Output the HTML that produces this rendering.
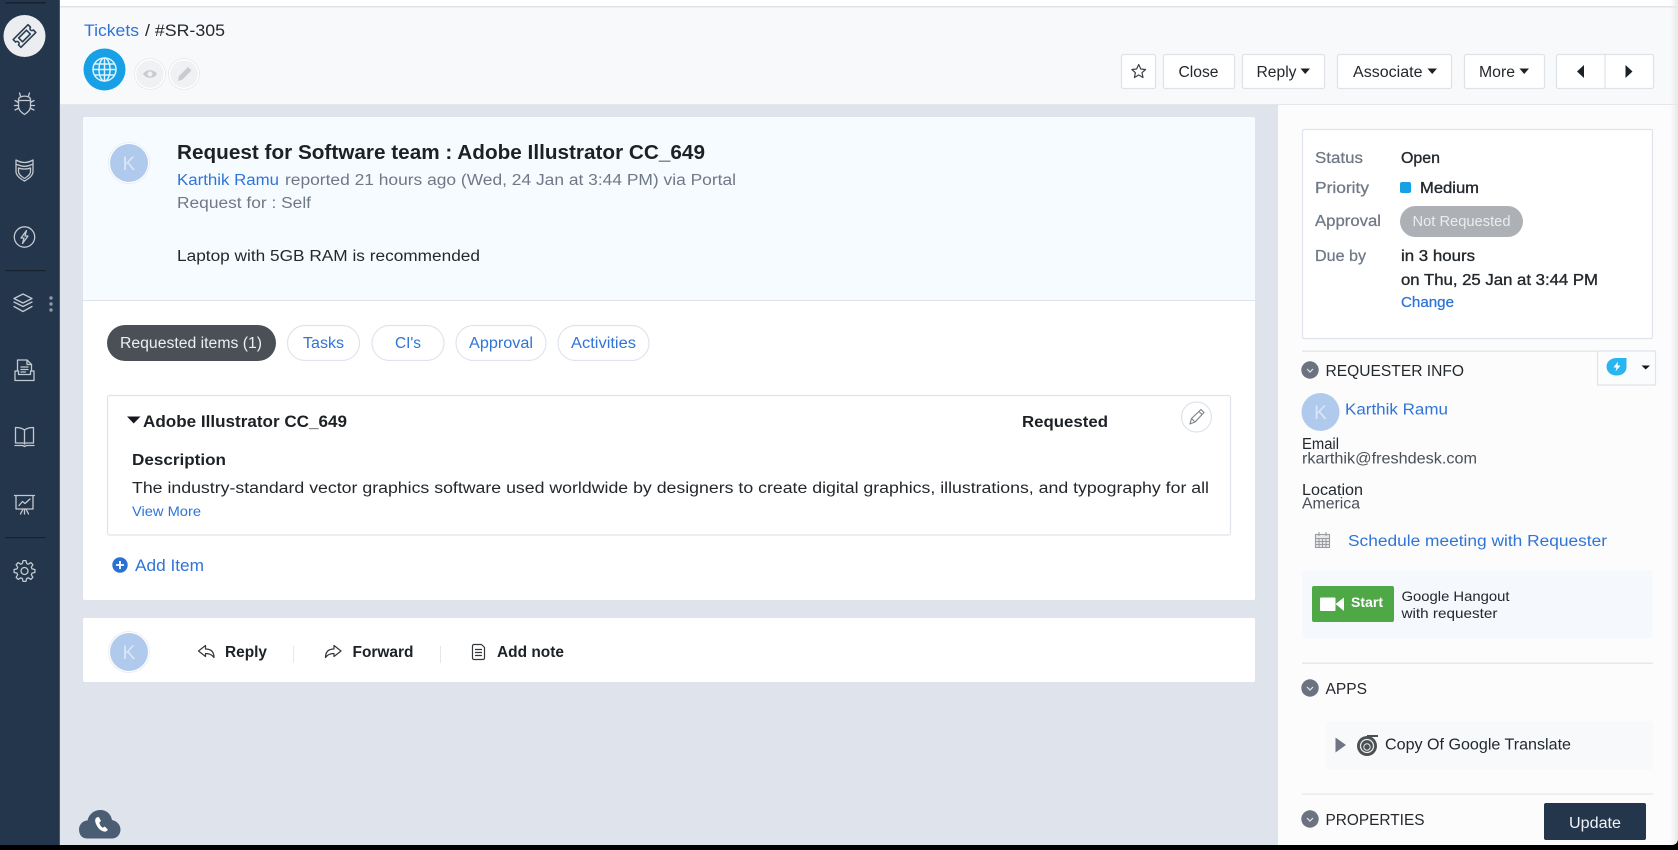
<!DOCTYPE html>
<html>
<head>
<meta charset="utf-8">
<style>
html,body{margin:0;padding:0;background:#000;width:1678px;height:850px;overflow:hidden}
svg{display:block}
text{font-family:"Liberation Sans",sans-serif;font-size:15.5px;fill:#23282d}
.l{fill:#2f74d6}
.g{fill:#6f7885}
.gm{fill:#6f7885;stroke:#6f7885;stroke-width:.25}
.d{fill:#4a5058}
.b{font-weight:bold;fill:#1c2126}
.m{stroke:#23282d;stroke-width:.35}
.ic{fill:none;stroke:#c3c9d1;stroke-width:1.300;stroke-linecap:round;stroke-linejoin:round}
.btn{fill:#fff;stroke:#dfe3e8;stroke-width:1.2}
.tab{fill:#fff;stroke:#dfe4ec;stroke-width:1.2}
</style>
</head>
<body>
<svg width="1678" height="850" viewBox="0 0 1678 850" xmlns="http://www.w3.org/2000/svg">
<defs>
<linearGradient id="edge" x1="0" x2="1" y1="0" y2="0">
<stop offset="0" stop-color="#e9ebed" stop-opacity="0"/>
<stop offset="1" stop-color="#e6e8ea"/>
</linearGradient>
</defs>
<!-- backgrounds -->
<rect x="0" y="0" width="1678" height="845" fill="#dfe4ec"/>
<rect x="60" y="0" width="1618" height="7" fill="#ffffff"/>
<rect x="60" y="6" width="1618" height="1.5" fill="#dfe3e8"/>
<rect x="60" y="7.5" width="1618" height="96.5" fill="#f7f9fb"/>
<rect x="60" y="104" width="1618" height="1" fill="#e4e8ed"/>
<rect x="1278" y="105" width="400" height="740" fill="#fcfcfd"/>
<rect x="1670" y="0" width="8" height="845" fill="url(#edge)"/>
<!-- sidebar -->
<rect x="0" y="0" width="60" height="845" fill="#24364b"/>
<rect x="59" y="0" width="1" height="845" fill="#46586b"/>
<rect x="5" y="2" width="41" height="1.500" fill="#16222f"/>
<rect x="5" y="270" width="41" height="1.200" fill="#16222f"/>
<rect x="5" y="537" width="41" height="1.200" fill="#16222f"/>
<circle cx="24.500" cy="36" r="21" fill="#ebedf0"/>
<g transform="translate(24.500 36) rotate(-45)" fill="none" stroke="#2c3e52" stroke-width="1.600" stroke-linejoin="round">
  <path d="M-10.500 -5.500H10.500V-2A2 2 0 0 0 10.500 2V5.500H-10.500V2A2 2 0 0 0 -10.500 -2Z"/>
  <rect x="-5.500" y="-2.700" width="11" height="5.400"/>
</g>
<!-- bug -->
<g class="ic" transform="translate(24.500 104)">
  <path d="M-6 -4.500C-6 -9 6 -9 6 -4.500V3C6 6 3 8.500 0 10.500C-3 8.500 -6 6 -6 3Z"/>
  <path d="M-6 -3.500H6"/>
  <path d="M-4 -8L-5 -11M4 -8L5 -11M-6 -1.500L-9.500 -3.500M6 -1.500L9.500 -3.500M-6 1.500H-10M6 1.500H10M-5.500 4L-9.500 6M5.500 4L9.500 6"/>
</g>
<!-- shield -->
<g class="ic" transform="translate(24.500 170.500)">
  <path d="M-8.500 -10.500C-5 -8.500 -3 -8 0 -8C3 -8 5 -8.500 8.500 -10.500V-6.500C5 -4.800 3 -4.200 0 -4.200C-3 -4.200 -5 -4.800 -8.500 -6.500Z"/>
  <path d="M-8.500 -6.500V1C-8.500 5.500 -3.500 8.500 0 10.500C3.500 8.500 8.500 5.500 8.500 1V-6.500"/>
  <path d="M-6 -2.500C-3 -1.200 3 -1.200 6 -2.500V1C6 4 2.500 6.500 0 8C-2.500 6.500 -6 4 -6 1Z"/>
</g>
<!-- bolt -->
<g class="ic" transform="translate(24.500 237)">
  <circle r="10.200"/>
  <path d="M2 -6.500L-3.500 1H-0.500L-2 6.500L3.500 -1H0.500Z"/>
</g>
<!-- layers -->
<g class="ic" transform="translate(23 304)">
  <path d="M0 -10L9 -5.500L0 -1L-9 -5.500Z"/>
  <path d="M-9 -2L0 2.500L9 -2"/>
  <path d="M-9 2.500L0 7.500L9 2.500"/>
</g>
<circle cx="51" cy="298" r="1.700" fill="#8f99a6"/>
<circle cx="51" cy="304" r="1.700" fill="#8f99a6"/>
<circle cx="51" cy="310" r="1.700" fill="#8f99a6"/>
<!-- report -->
<g class="ic" transform="translate(24.500 370)">
  <path d="M-7 1V-10H2.500L7 -5.500V1"/>
  <path d="M2.500 -10V-5.500H7"/>
  <path d="M-3.500 -3H3.500M-3.500 -0.500H3.500M-3.500 2H1"/>
  <path d="M-9.500 1V10.500H9.500V1H6V4.500H-6V1Z"/>
</g>
<!-- book -->
<g class="ic" transform="translate(24.500 437)">
  <path d="M0 -7C-2.500 -9 -6 -9.500 -9 -9.500V6H-1.500C-0.800 6 -0.300 6.300 0 7C0.300 6.300 0.800 6 1.500 6H9V-9.500C6 -9.500 2.500 -9 0 -7Z"/>
  <path d="M0 -7V7"/>
  <path d="M-9.500 8.500H-2L0 9.500L2 8.500H9.500"/>
</g>
<!-- presentation -->
<g class="ic" transform="translate(24.500 504)">
  <path d="M-10 -8.500H10M-8.500 -8.500V5H8.500V-8.500"/>
  <path d="M-5.500 1.500L-2 -2.500L0.500 -0.500L5.500 -5"/>
  <path d="M-1.500 5L-4 10M1.500 5L4 10M0 5V10"/>
</g>
<!-- gear -->
<g class="ic" transform="translate(24.500 571)">
  <circle r="3.500"/>
  <path d="M-2.150 -7.500L-1.460 -10.400L1.460 -10.400L2.150 -7.500L3.780 -6.820L6.320 -8.390L8.390 -6.320L6.820 -3.780L7.500 -2.150L10.400 -1.460L10.400 1.460L7.500 2.150L6.820 3.780L8.390 6.320L6.320 8.390L3.780 6.820L2.150 7.500L1.460 10.400L-1.460 10.400L-2.150 7.500L-3.780 6.820L-6.320 8.390L-8.390 6.320L-6.820 3.780L-7.500 2.150L-10.400 1.460L-10.400 -1.460L-7.500 -2.150L-6.820 -3.780L-8.390 -6.320L-6.320 -8.390L-3.780 -6.820Z"/>
</g>

<!-- header -->
<text x="84" y="36" class="l" style="font-size:17px" textLength="55" lengthAdjust="spacingAndGlyphs">Tickets</text>
<text x="145" y="36" style="font-size:17px" textLength="80" lengthAdjust="spacingAndGlyphs">/ #SR-305</text>
<circle cx="104.500" cy="69.500" r="21" fill="#18a0e6"/>
<g fill="none" stroke="#dff2fc" stroke-width="1.500" transform="translate(104.500 69.500)">
  <circle r="11.500"/>
  <ellipse rx="5.500" ry="11.500"/>
  <path d="M0 -11.500V11.500M-11.500 0H11.500M-10 -5.500H10M-10 5.500H10"/>
</g>
<circle cx="150" cy="74" r="14.500" fill="#f0f1f3" stroke="#fff" stroke-width="1.500"/>
<circle cx="150" cy="74" r="15.500" fill="none" stroke="#e6e8eb" stroke-width=".8"/>
<path d="M143 74C146 69 154 69 157 74C154 79 146 79 143 74Z" fill="#c8cbd0"/>
<circle cx="150" cy="74" r="2.500" fill="#f0f1f3"/>
<circle cx="184" cy="74" r="14.500" fill="#f0f1f3" stroke="#fff" stroke-width="1.500"/>
<circle cx="184" cy="74" r="15.500" fill="none" stroke="#e6e8eb" stroke-width=".8"/>
<path d="M178 81L179 76L188 67L191.500 70.500L182.500 79.500Z" fill="#c8cbd0"/>

<!-- header buttons -->
<rect x="1121.500" y="54.500" width="34" height="34" rx="2" class="btn"/>
<path d="M1138.700 64.500L1140.800 69L1145.500 69.500L1142 72.700L1143 77.500L1138.700 75L1134.400 77.500L1135.400 72.700L1131.900 69.500L1136.600 69Z" fill="none" stroke="#3c4248" stroke-width="1.200" stroke-linejoin="round"/>
<rect x="1163.500" y="54.500" width="71" height="34" rx="2" class="btn"/>
<text x="1178.500" y="77" textLength="40" lengthAdjust="spacingAndGlyphs">Close</text>
<rect x="1242.500" y="54.500" width="82" height="34" rx="2" class="btn"/>
<text x="1256.500" y="77" textLength="40" lengthAdjust="spacingAndGlyphs">Reply</text>
<path d="M1300.500 68.500H1310L1305.200 74Z" fill="#1c2126"/>
<rect x="1337.500" y="54.500" width="114" height="34" rx="2" class="btn"/>
<text x="1353" y="77" textLength="69.500" lengthAdjust="spacingAndGlyphs">Associate</text>
<path d="M1427.500 68.500H1437L1432.200 74Z" fill="#1c2126"/>
<rect x="1464.500" y="54.500" width="80" height="34" rx="2" class="btn"/>
<text x="1479" y="77" textLength="36" lengthAdjust="spacingAndGlyphs">More</text>
<path d="M1519.500 68.500H1529L1524.200 74Z" fill="#1c2126"/>
<rect x="1556.500" y="54.500" width="97" height="34" rx="2" class="btn"/>
<path d="M1605 54.500V88.500" stroke="#dfe3e8" stroke-width="1.200"/>
<path d="M1584 65V78L1577 71.500Z" fill="#1c2126"/>
<path d="M1625.500 65V78L1632.500 71.500Z" fill="#1c2126"/>

<!-- main card -->
<rect x="83" y="117" width="1172" height="483" rx="2" fill="#ffffff"/>
<path d="M83 300V119A2 2 0 0 1 85 117H1253A2 2 0 0 1 1255 119V300Z" fill="#f6fbff"/>
<rect x="83" y="300" width="1172" height="1" fill="#dfe4ec"/>
<circle cx="129" cy="163" r="20.500" fill="#fff" stroke="#ebedf0" stroke-width="1"/>
<circle cx="129" cy="163" r="19" fill="#b0caed"/>
<text x="129" y="170" text-anchor="middle" style="font-size:19px;fill:#dbe7f7">K</text>
<text x="177" y="159" class="b" style="font-size:20px" textLength="528" lengthAdjust="spacingAndGlyphs">Request for Software team : Adobe Illustrator CC_649</text>
<text x="177" y="185" class="l" textLength="102" lengthAdjust="spacingAndGlyphs">Karthik Ramu</text>
<text x="285" y="185" class="g" textLength="451" lengthAdjust="spacingAndGlyphs">reported 21 hours ago (Wed, 24 Jan at 3:44 PM) via Portal</text>
<text x="177" y="208" class="g" textLength="134" lengthAdjust="spacingAndGlyphs">Request for : Self</text>
<text x="177" y="261" textLength="303" lengthAdjust="spacingAndGlyphs">Laptop with 5GB RAM is recommended</text>

<!-- tabs -->
<rect x="107" y="325" width="169" height="36" rx="18" fill="#4a5056"/>
<text x="120" y="348" style="fill:#eceef0" textLength="142" lengthAdjust="spacingAndGlyphs">Requested items (1)</text>
<rect x="287.500" y="325.500" width="72" height="35" rx="17.500" class="tab"/>
<text x="303" y="348" class="l" textLength="41" lengthAdjust="spacingAndGlyphs">Tasks</text>
<rect x="372" y="325.500" width="72" height="35" rx="17.500" class="tab"/>
<text x="395" y="348" class="l" textLength="26" lengthAdjust="spacingAndGlyphs">CI's</text>
<rect x="456" y="325.500" width="90" height="35" rx="17.500" class="tab"/>
<text x="469" y="348" class="l" textLength="64" lengthAdjust="spacingAndGlyphs">Approval</text>
<rect x="558" y="325.500" width="91" height="35" rx="17.500" class="tab"/>
<text x="571" y="348" class="l" textLength="65" lengthAdjust="spacingAndGlyphs">Activities</text>

<!-- item box -->
<rect x="107.500" y="395.500" width="1123" height="139.500" rx="2" fill="#fff" stroke="#dfe4ec" stroke-width="1.200"/>
<path d="M127 416.500H140.500L133.700 423.500Z" fill="#15191d"/>
<text x="143" y="427" class="b" style="font-size:16.500px" textLength="204" lengthAdjust="spacingAndGlyphs">Adobe Illustrator CC_649</text>
<text x="1022" y="427" class="b" style="font-size:16px" textLength="86" lengthAdjust="spacingAndGlyphs">Requested</text>
<circle cx="1196.500" cy="417" r="15" fill="#fff" stroke="#dfe4ec" stroke-width="1.200"/>
<g fill="none" stroke="#80868e" stroke-width="1.200" stroke-linejoin="round"><path d="M1190 424L1191.500 418.500L1201 409.500L1204 412.500L1195 422Z"/><path d="M1191.500 418.500L1195 422M1199 411.500L1202 414.500"/></g>
<text x="132" y="465" class="b" style="font-size:16px" textLength="94" lengthAdjust="spacingAndGlyphs">Description</text>
<text x="132" y="493" textLength="1077" lengthAdjust="spacingAndGlyphs">The industry-standard vector graphics software used worldwide by designers to create digital graphics, illustrations, and typography for all</text>
<text x="132" y="516" class="l" style="font-size:14px" textLength="69" lengthAdjust="spacingAndGlyphs">View More</text>
<circle cx="120" cy="565" r="7.700" fill="#2b70d3"/>
<path d="M120 561V569M116 565H124" stroke="#fff" stroke-width="1.800"/>
<text x="135" y="571" class="l" style="font-size:16.500px" textLength="69" lengthAdjust="spacingAndGlyphs">Add Item</text>

<!-- reply card -->
<rect x="83" y="618" width="1172" height="64" rx="2" fill="#fff"/>
<circle cx="129" cy="652" r="20.500" fill="#fff" stroke="#eceef0" stroke-width="1"/>
<circle cx="129" cy="652" r="19" fill="#b0caed"/>
<text x="129" y="659" text-anchor="middle" style="font-size:19px;fill:#dbe7f7">K</text>
<g fill="none" stroke="#33383e" stroke-width="1.200" stroke-linejoin="round">
  <path d="M198.500 651L205.500 645.500V649C210 649 214 651 214 657.500C212 654.500 209.500 653.500 205.500 653.500V656.500Z"/>
  <path d="M341 651L334 645.500V649C329.500 649 325.500 651 325.500 657.500C327.500 654.500 330 653.500 334 653.500V656.500Z"/>
  <path d="M474 644.500H481.500L484.500 647.500V658A1.500 1.500 0 0 1 483 659.500H474A1.500 1.500 0 0 1 472.500 658V646A1.500 1.500 0 0 1 474 644.500Z"/>
  <path d="M475 649.500H482M475 652.500H482M475 655.500H482"/>
</g>
<text x="225" y="657" class="b" style="font-size:15.500px" textLength="42" lengthAdjust="spacingAndGlyphs">Reply</text>
<rect x="293" y="646" width="1" height="17" fill="#e4e7eb"/>
<text x="352.500" y="657" class="b" style="font-size:15.500px" textLength="61" lengthAdjust="spacingAndGlyphs">Forward</text>
<rect x="440" y="646" width="1" height="17" fill="#e4e7eb"/>
<text x="497" y="657" class="b" style="font-size:15.500px" textLength="67" lengthAdjust="spacingAndGlyphs">Add note</text>

<!-- cloud phone -->
<path d="M87 838.500C81.500 838.500 79 834 79 829.500C79 824.500 83 820.500 87.500 820.500C89 814 94 810 100.500 810C106.500 810 111 814 112 820C117 821 120.500 825 120.500 829.500C120.500 834.500 117 838.500 112 838.500Z" fill="#4a5d72"/>
<path d="M96.500 817.500C94.800 819 94.800 821 96 824C97.500 827.500 100 830.500 103.800 831.500C105.800 832 107.300 831 107.800 829.500L104.800 826.500L102.800 827.800C101 826.800 99.800 824.800 99.300 822.500L101 821L98.800 817Z" fill="#fff"/>

<!-- right panel: status box -->
<rect x="1302.500" y="129.500" width="350" height="209" rx="1.500" fill="#fff" stroke="#dfe4ec" stroke-width="1.200"/>
<text x="1315" y="163" class="gm" textLength="48" lengthAdjust="spacingAndGlyphs">Status</text>
<text x="1401" y="163" class="m" textLength="39" lengthAdjust="spacingAndGlyphs">Open</text>
<text x="1315" y="193" class="gm" textLength="54" lengthAdjust="spacingAndGlyphs">Priority</text>
<rect x="1400" y="182" width="11" height="11" rx="2" fill="#18a0e6"/>
<text x="1420" y="193" class="m" textLength="59" lengthAdjust="spacingAndGlyphs">Medium</text>
<text x="1315" y="226" class="gm" textLength="66" lengthAdjust="spacingAndGlyphs">Approval</text>
<rect x="1400" y="206" width="123" height="31" rx="15.500" fill="#adb0b5"/>
<text x="1412.500" y="226" style="font-size:14.500px;fill:#ebecee" textLength="98" lengthAdjust="spacingAndGlyphs">Not Requested</text>
<text x="1315" y="261" class="gm" textLength="51" lengthAdjust="spacingAndGlyphs">Due by</text>
<text x="1401" y="261" class="m" textLength="74" lengthAdjust="spacingAndGlyphs">in 3 hours</text>
<text x="1401" y="285" class="m" textLength="197" lengthAdjust="spacingAndGlyphs">on Thu, 25 Jan at 3:44 PM</text>
<text x="1401" y="307" class="l" style="font-size:14.500px;stroke:#2f74d6;stroke-width:.25" textLength="53" lengthAdjust="spacingAndGlyphs">Change</text>

<!-- requester -->
<rect x="1302" y="350.500" width="295" height="1.500" fill="#e4e7eb"/>
<rect x="1597.500" y="351" width="58" height="34" fill="#fbfcfd" stroke="#dfe4ec" stroke-width="1.200"/>
<path d="M1616.500 358H1626.500V367C1626.500 372 1622.500 375.500 1616.500 375.500C1611 375.500 1606.500 372 1606.500 366.500C1606.500 361.500 1611 358 1616.500 358Z" fill="#29b5f0"/>
<path d="M1618 361.500L1613.500 367.500H1616.500L1615.500 371.500L1620.500 365.500H1617.500Z" fill="#fff"/>
<path d="M1641.500 365.500H1650L1645.700 369.500Z" fill="#15191d"/>
<circle cx="1310" cy="370" r="8.700" fill="#6b7280"/>
<path d="M1307 369L1310 372L1313 369" fill="none" stroke="#e6e8ea" stroke-width="1.200"/>
<text x="1325.500" y="376" style="font-size:16px" textLength="138.500" lengthAdjust="spacingAndGlyphs">REQUESTER INFO</text>
<circle cx="1320.500" cy="412" r="19" fill="#b0caed"/>
<text x="1320.500" y="419" text-anchor="middle" style="font-size:19px;fill:#dbe7f7">K</text>
<text x="1345" y="414.500" class="l" textLength="103" lengthAdjust="spacingAndGlyphs">Karthik Ramu</text>
<text x="1302" y="449" textLength="37" lengthAdjust="spacingAndGlyphs">Email</text>
<text x="1302" y="463.500" class="d" textLength="175" lengthAdjust="spacingAndGlyphs">rkarthik@freshdesk.com</text>
<text x="1302" y="495" textLength="61" lengthAdjust="spacingAndGlyphs">Location</text>
<text x="1302" y="508.500" class="d" textLength="58" lengthAdjust="spacingAndGlyphs">America</text>
<g fill="none" stroke="#9a9da2" stroke-width="1.100">
  <rect x="1315.500" y="534.500" width="14" height="13" fill="#e8e9ea"/>
  <path d="M1315.500 538.500H1329.500M1319 532V536M1326 532V536M1315.500 541.500H1329.500M1315.500 544.500H1329.500M1319 538.500V547.500M1322.500 538.500V547.500M1326 538.500V547.500"/>
</g>
<text x="1348" y="546" class="l" textLength="259" lengthAdjust="spacingAndGlyphs">Schedule meeting with Requester</text>
<rect x="1302.500" y="570.500" width="350" height="68" rx="2" fill="#f5f8fd"/>
<rect x="1312" y="586" width="82" height="36" rx="2" fill="#4ea845"/>
<rect x="1320" y="597.500" width="15.500" height="13.500" rx="1" fill="#fff"/>
<path d="M1335.500 604L1344 597.500V611Z" fill="#fff"/>
<text x="1351" y="607" class="b" style="font-size:14px;fill:#ffffff" textLength="32" lengthAdjust="spacingAndGlyphs">Start</text>
<text x="1401.500" y="601" style="font-size:14px" textLength="108" lengthAdjust="spacingAndGlyphs">Google Hangout</text>
<text x="1401.500" y="618" style="font-size:14px" textLength="96" lengthAdjust="spacingAndGlyphs">with requester</text>

<!-- apps -->
<rect x="1302" y="662.500" width="351" height="1.500" fill="#e4e7eb"/>
<circle cx="1310" cy="688" r="8.700" fill="#6b7280"/>
<path d="M1307 687L1310 690L1313 687" fill="none" stroke="#e6e8ea" stroke-width="1.200"/>
<text x="1325.500" y="694" style="font-size:16px" textLength="41.500" lengthAdjust="spacingAndGlyphs">APPS</text>
<rect x="1325.500" y="721.500" width="327.500" height="48" rx="2" fill="#f8f9fb"/>
<path d="M1335.500 737.500L1346 745L1335.500 752.500Z" fill="#6e7684"/>
<circle cx="1367" cy="746" r="10" fill="#4a4f52"/>
<path d="M1367 736H1378" stroke="#4a4f52" stroke-width="2"/>
<circle cx="1367" cy="746" r="6.500" fill="none" stroke="#e8e9ea" stroke-width="1.300"/>
<circle cx="1367" cy="747" r="3.200" fill="#4a4f52" stroke="#e8e9ea" stroke-width="1"/>
<text x="1385" y="749.500" textLength="186" lengthAdjust="spacingAndGlyphs">Copy Of Google Translate</text>
<rect x="1302" y="793.500" width="351" height="1.200" fill="#e4e7eb"/>
<circle cx="1310" cy="819" r="8.700" fill="#6b7280"/>
<path d="M1307 818L1310 821L1313 818" fill="none" stroke="#e6e8ea" stroke-width="1.200"/>
<text x="1325.500" y="825" style="font-size:16px" textLength="99" lengthAdjust="spacingAndGlyphs">PROPERTIES</text>
<rect x="1544" y="803" width="102" height="37" rx="2" fill="#24364b"/>
<text x="1569" y="828" style="fill:#f0f2f5" textLength="52" lengthAdjust="spacingAndGlyphs">Update</text>
<!-- bottom black bar + rounded corner -->
<rect x="0" y="845" width="1678" height="5" fill="#000"/>
<path d="M1678 839V845H1672C1675.500 845 1678 842.500 1678 839Z" fill="#000"/>
</svg>
</body>
</html>
